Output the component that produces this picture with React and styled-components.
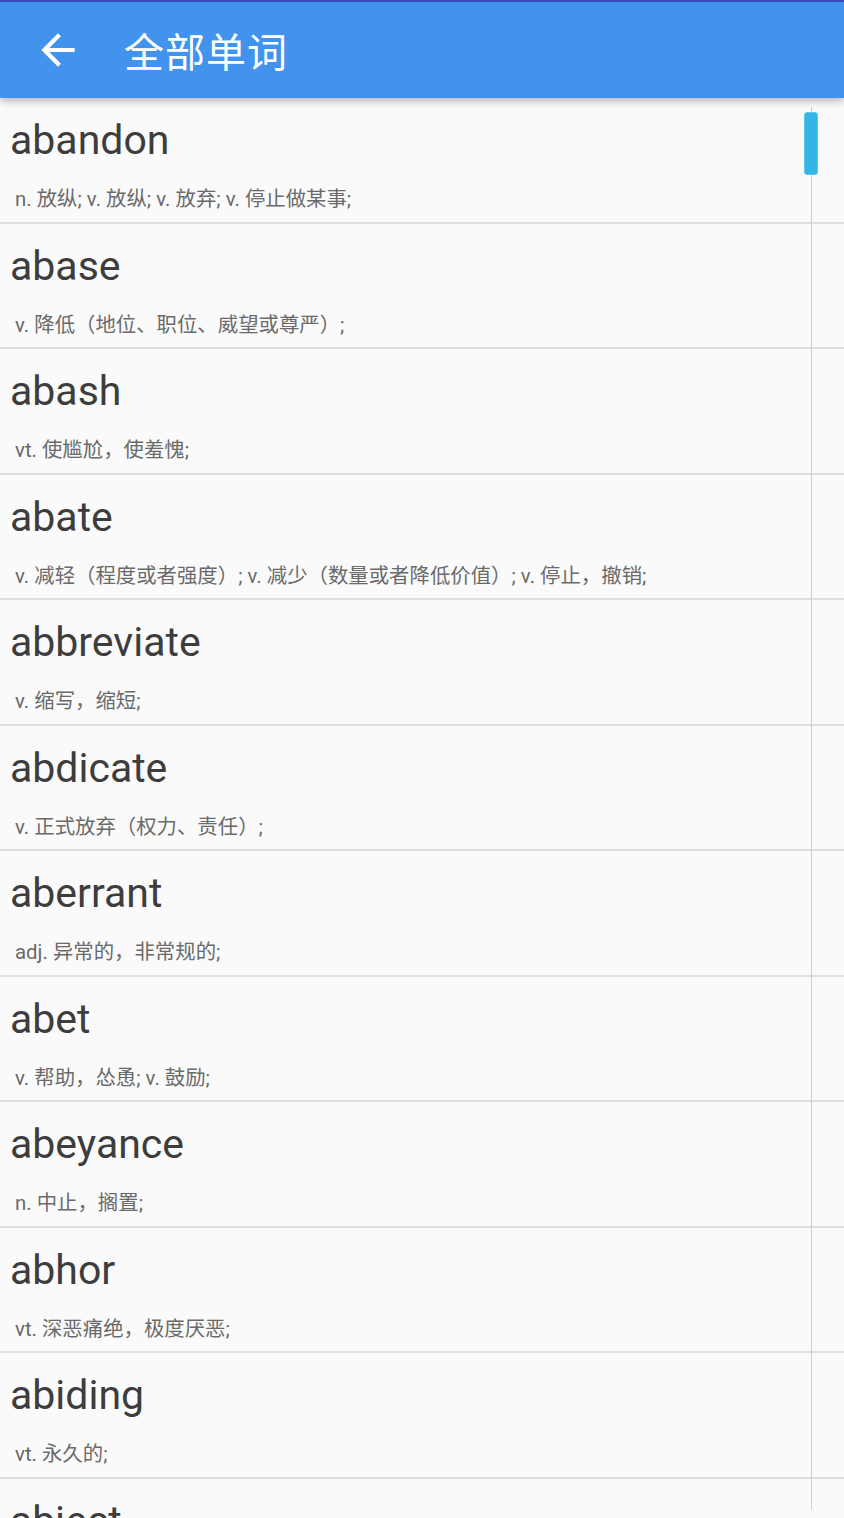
import React from "react";
import styled, { createGlobalStyle } from "styled-components";

const GlobalStyle = createGlobalStyle`
  html, body {
    margin: 0;
    padding: 0;
    background: #fafafa;
  }
  body {
    font-family: Roboto, "Noto Sans CJK SC", sans-serif;
    overflow: hidden;
  }
`;

const Screen = styled.div`
  position: relative;
  width: 844px;
  height: 1518px;
  overflow: hidden;
  background: #fafafa;
`;

const Toolbar = styled.header`
  position: relative;
  z-index: 2;
  height: 96px;
  border-top: 2px solid #3b47bd;
  background: #4193ed;
  display: flex;
  align-items: center;
  box-shadow: 0 3px 8px rgba(0, 0, 0, 0.28);
`;

const BackButton = styled.button`
  width: 50px;
  height: 50px;
  margin-left: 33px;
  padding: 0;
  border: none;
  background: transparent;
  display: flex;
  align-items: center;
  justify-content: center;
  cursor: pointer;
`;

const Title = styled.h1`
  margin: 0 0 0 41px;
  font-family: "Noto Sans CJK SC", sans-serif;
  font-size: 40px;
  font-weight: 400;
  line-height: 1;
  color: #fff;
  letter-spacing: 1px;
`;

const List = styled.ul`
  list-style: none;
  margin: 0;
  padding: 0;
`;

const Row = styled.li`
  height: 123.5px;
  box-sizing: content-box;
  border-bottom: 2px solid #dedede;
  padding: 0;
  display: flex;
  flex-direction: column;
`;

const Word = styled.div`
  margin-top: 18px;
  padding-left: 10px;
  font-family: Roboto, sans-serif;
  font-size: 41px;
  line-height: 49px;
  color: #3d3d3d;
`;

const Meaning = styled.div`
  margin-top: 20px;
  padding-left: 15px;
  font-family: Roboto, "Noto Sans CJK SC", sans-serif;
  font-size: 20.4px;
  line-height: 28px;
  color: #6a6a6a;
  white-space: nowrap;
`;

const ScrollTrack = styled.div`
  position: absolute;
  left: 811px;
  top: 107px;
  width: 1px;
  height: 1403px;
  background: #cfcfcf;
  z-index: 1;
`;

const ScrollThumb = styled.div`
  position: absolute;
  left: 804px;
  top: 112px;
  width: 14px;
  height: 63px;
  box-sizing: border-box;
  border: 1px solid #5cc6ee;
  border-radius: 3px;
  background: #33b5e5;
  z-index: 1;
`;

const words = [
  ["abandon", "n. 放纵; v. 放纵; v. 放弃; v. 停止做某事;"],
  ["abase", "v. 降低（地位、职位、威望或尊严）;"],
  ["abash", "vt. 使尴尬，使羞愧;"],
  ["abate", "v. 减轻（程度或者强度）; v. 减少（数量或者降低价值）; v. 停止，撤销;"],
  ["abbreviate", "v. 缩写，缩短;"],
  ["abdicate", "v. 正式放弃（权力、责任）;"],
  ["aberrant", "adj. 异常的，非常规的;"],
  ["abet", "v. 帮助，怂恿; v. 鼓励;"],
  ["abeyance", "n. 中止，搁置;"],
  ["abhor", "vt. 深恶痛绝，极度厌恶;"],
  ["abiding", "vt. 永久的;"],
  ["abject", "adj. 极可怜的，卑下的;"],
];

function BackArrow() {
  return (
    <svg width="50" height="50" viewBox="0 0 24 24" fill="#fff">
      <path d="M20 11H7.83l5.59-5.59L12 4l-8 8 8 8 1.41-1.41L7.83 13H20v-2z" />
    </svg>
  );
}

export default function App() {
  return (
    <>
      <GlobalStyle />
      <Screen>
        <Toolbar>
          <BackButton aria-label="返回">
            <BackArrow />
          </BackButton>
          <Title>全部单词</Title>
        </Toolbar>
        <List>
          {words.map(([word, meaning]) => (
            <Row key={word}>
              <Word>{word}</Word>
              <Meaning>{meaning}</Meaning>
            </Row>
          ))}
        </List>
        <ScrollTrack />
        <ScrollThumb />
      </Screen>
    </>
  );
}
